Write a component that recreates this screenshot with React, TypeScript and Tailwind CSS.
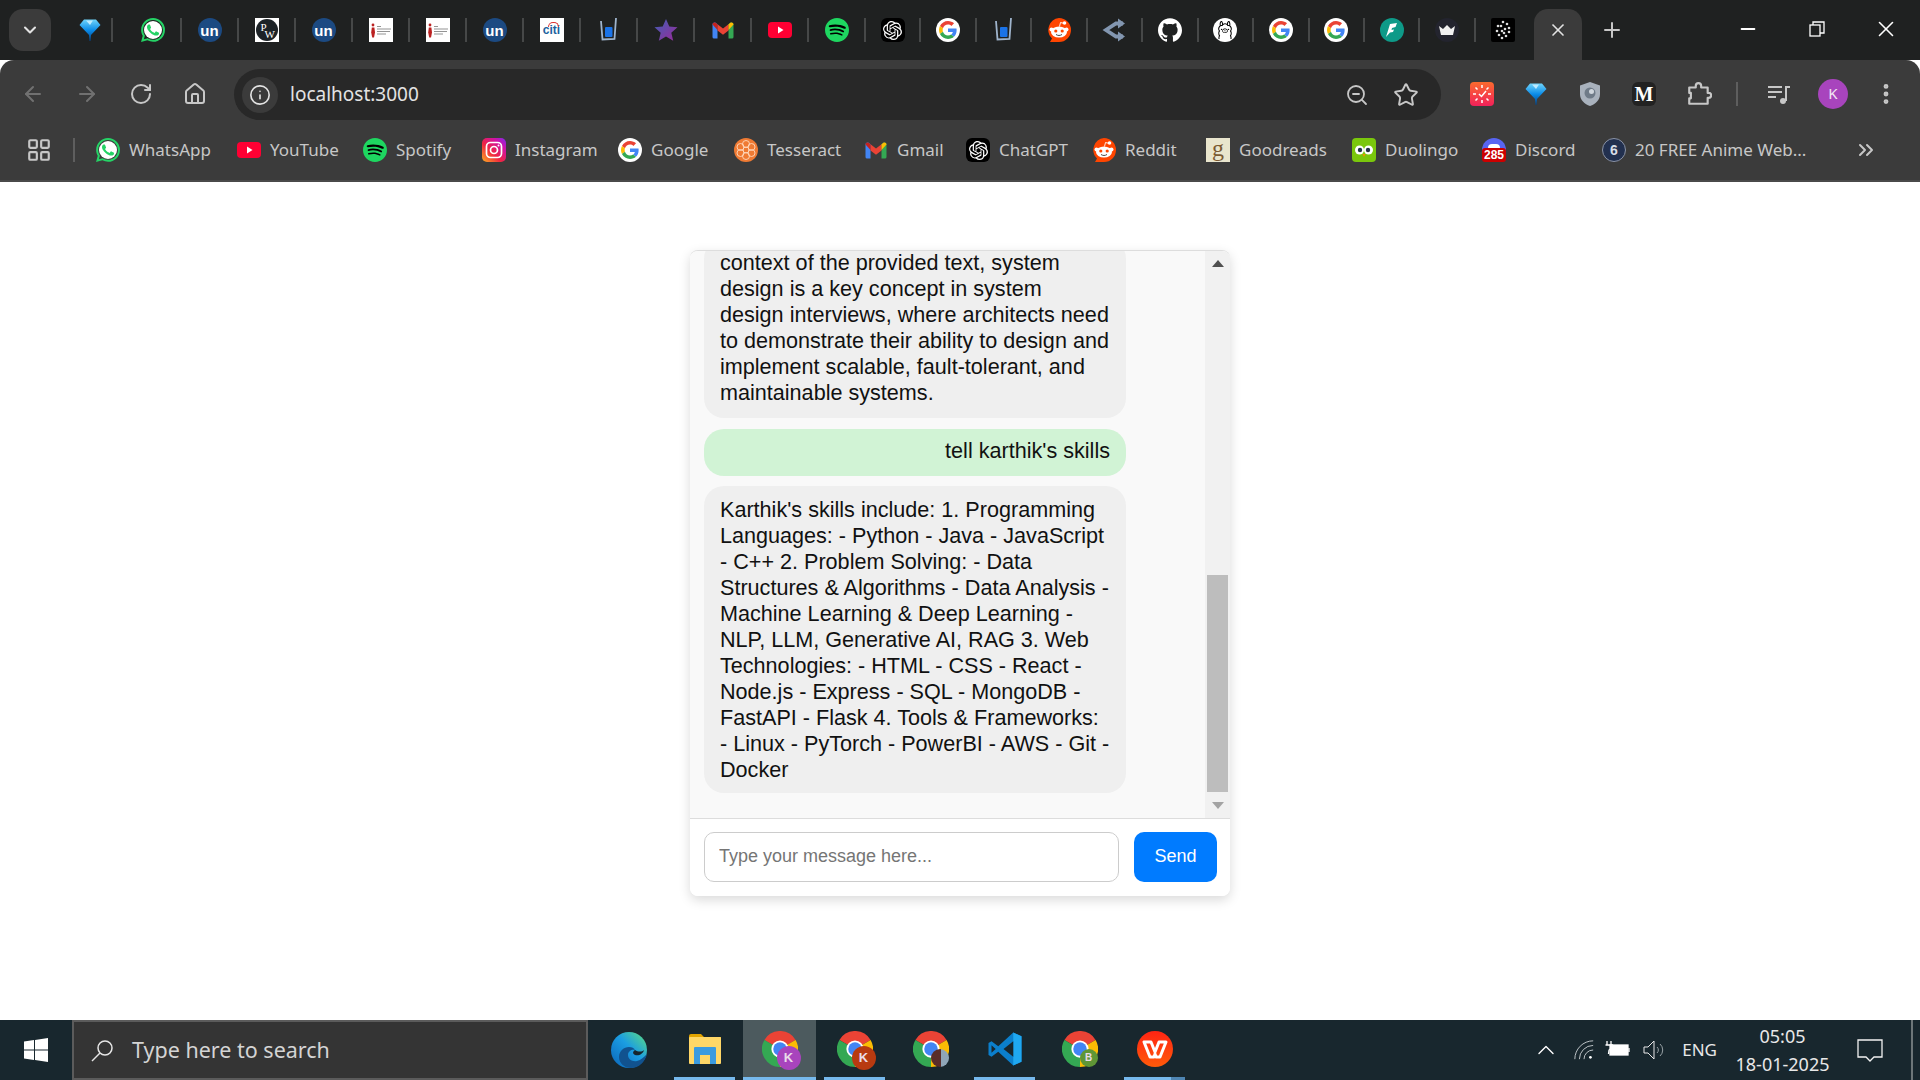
import type { ReactNode } from "react";
import {
  ArrowLeft,
  ArrowRight,
  ChevronDown,
  ChevronUp,
  ChevronsRight,
  EllipsisVertical,
  House,
  Info,
  LayoutGrid,
  Minus,
  Plus,
  RotateCw,
  Star,
  X,
  ZoomOut,
} from "lucide-react";
import { SiGithub, SiOllama, SiOpenai, SiSpotify, SiWhatsapp } from "react-icons/si";

function GoogleG() {
  return (
    <div className="w-6 h-6 rounded-full bg-white flex items-center justify-center">
      <svg viewBox="0 0 48 48" className="w-[18px] h-[18px]">
        <path fill="#EA4335" d="M24 9.5c3.54 0 6.71 1.22 9.21 3.6l6.85-6.85C35.9 2.38 30.47 0 24 0 14.62 0 6.51 5.38 2.56 13.22l7.98 6.19C12.43 13.72 17.74 9.5 24 9.5z" />
        <path fill="#4285F4" d="M46.98 24.55c0-1.57-.15-3.09-.38-4.55H24v9.02h12.94c-.58 2.96-2.26 5.48-4.78 7.18l7.73 6c4.51-4.18 7.09-10.36 7.09-17.65z" />
        <path fill="#FBBC05" d="M10.53 28.59c-.48-1.45-.76-2.99-.76-4.59s.27-3.14.76-4.59l-7.98-6.19C.92 16.46 0 20.12 0 24c0 3.88.92 7.54 2.56 10.78l7.97-6.19z" />
        <path fill="#34A853" d="M24 48c6.48 0 11.93-2.13 15.89-5.81l-7.73-6c-2.15 1.45-4.92 2.3-8.16 2.3-6.26 0-11.57-4.22-13.47-9.91l-7.98 6.19C6.51 42.62 14.62 48 24 48z" />
      </svg>
    </div>
  );
}

function Whatsapp() {
  return (
    <div className="w-6 h-6 relative">
      <div className="absolute inset-[3px] rounded-full bg-white" />
      <SiWhatsapp className="absolute inset-0 w-6 h-6 text-[#25d366]" />
    </div>
  );
}

function Diamond({ id }: { id: string }) {
  return (
    <svg viewBox="0 0 24 24" className="w-6 h-6">
      <defs>
        <linearGradient id={id} x1="0" y1="0" x2="0" y2="1">
          <stop offset="0" stopColor="#6fd4fb" />
          <stop offset="0.5" stopColor="#0a8be8" />
          <stop offset="1" stopColor="#06407f" />
        </linearGradient>
      </defs>
      <path fill={`url(#${id})`} d="M6 1.500h12l4.500 5.500-9.500 10-.5 6h-1l-.5-6L1.500 7z" />
      <path fill="#bdeafe" d="M8 2.500h7l-3 4.500z" />
    </svg>
  );
}

function Un() {
  return (
    <div className="w-6 h-6 rounded-full bg-[#1c4a82] flex items-center justify-center text-white text-[15px] font-bold leading-none font-['Liberation_Sans',sans-serif]">
      un
    </div>
  );
}

function Pw() {
  return (
    <div className="w-6 h-6 bg-white flex items-center justify-center">
      <div className="w-[22px] h-[22px] rounded-full bg-[#1c2226] text-white text-[11px] leading-none relative font-['Liberation_Serif',serif]">
        <span className="absolute left-[5px] top-[3px]">P</span>
        <span className="absolute left-[9px] top-[10px]">W</span>
      </div>
    </div>
  );
}

function Mit() {
  return (
    <svg viewBox="0 0 24 24" className="w-6 h-6">
      <rect width="24" height="24" fill="#fff" />
      <circle cx="4" cy="7" r="1.400" fill="#b22" />
      <path d="M2.800 9.500h2.600l.6 5-1 5H3.200l-1-5z" fill="#b22" />
      <path d="M8 8.500h4M8 11h14M8 13.500h13M8 16h9" stroke="#666" strokeWidth="0.700" />
    </svg>
  );
}

function Citi() {
  return (
    <div className="w-6 h-6 bg-white flex items-center justify-center text-[#20619e] text-[12px] font-bold leading-none font-['Liberation_Sans',sans-serif] relative">
      citi
      <div className="absolute top-[4px] left-[8px] w-[11px] h-[5px] border-t border-x border-[#d33] rounded-t-full" />
    </div>
  );
}

function Cup() {
  return (
    <svg viewBox="0 0 24 24" className="w-6 h-6">
      <path d="M4 3l1.500 18.500 12-.5L19 0" fill="none" stroke="#9fb4cc" strokeWidth="1.800" />
      <rect x="8" y="9" width="7.500" height="10" rx="1" fill="#1a73e8" />
    </svg>
  );
}

function StarIcon() {
  return (
    <svg viewBox="0 0 24 24" className="w-6 h-6">
      <defs>
        <linearGradient id="starfill" x1="0" y1="0" x2="1" y2="1">
          <stop offset="0" stopColor="#3f5fb5" />
          <stop offset="1" stopColor="#9a2a9a" />
        </linearGradient>
      </defs>
      <path fill="url(#starfill)" d="M12 1l3.300 7.500 8.200.8-6.200 5.400 1.900 8L12 18.500l-7.200 4.200 1.900-8L.5 9.300l8.200-.8z" />
    </svg>
  );
}

function Gmail() {
  return (
    <svg viewBox="0 0 24 24" className="w-6 h-6">
      <path fill="#4285f4" d="M1.500 6.500c0-1.800 2-2.700 3.400-1.600L6.500 6.200V20.500H3A1.500 1.500 0 0 1 1.500 19z" />
      <path fill="#34a853" d="M17.500 20.500V6.200l1.600-1.300c1.400-1.100 3.400-.2 3.400 1.600V19a1.500 1.500 0 0 1-1.500 1.500z" />
      <path fill="#ea4335" d="M6.500 6.200L12 10.500l5.500-4.300V12.500L12 16.700 6.500 12.500z" />
      <path fill="#c5221f" d="M1.500 6.500l5 5.500V6.200L4.900 4.900C3.500 3.800 1.500 4.700 1.500 6.500z" />
      <path fill="#fbbc04" d="M17.500 6.200l1.600-1.300c1.400-1.100 3.400-.2 3.400 1.600l-5 5.500z" />
    </svg>
  );
}

function Youtube() {
  return (
    <svg viewBox="0 0 24 24" className="w-6 h-6">
      <rect y="4" width="24" height="16" rx="4" fill="#ff0033" />
      <path d="M10 8.500v7l5.500-3.500z" fill="#fff" />
    </svg>
  );
}

function Spotify() {
  return (
    <div className="w-6 h-6 relative">
      <div className="absolute inset-[2px] rounded-full bg-black" />
      <SiSpotify className="absolute inset-0 w-6 h-6 text-[#1ed760]" />
    </div>
  );
}

function Gpt() {
  return (
    <div className="w-6 h-6 rounded-[6px] bg-black flex items-center justify-center">
      <SiOpenai className="w-[19px] h-[19px] text-white" />
    </div>
  );
}

function Reddit() {
  return (
    <svg viewBox="0 0 24 24" className="w-6 h-6">
      <path fill="#ff4500" d="M12 0a12 12 0 1 1 0 24H3l2-3.500A12 12 0 0 1 12 0z" />
      <ellipse cx="12" cy="14" rx="8" ry="5.500" fill="#fff" />
      <circle cx="4.500" cy="11.500" r="2" fill="#fff" />
      <circle cx="19.500" cy="11.500" r="2" fill="#fff" />
      <circle cx="17.500" cy="5" r="1.800" fill="#fff" />
      <path d="M12.500 8.500l1-4 4 1" stroke="#fff" strokeWidth="0.900" fill="none" />
      <circle cx="8.800" cy="13" r="1.600" fill="#ff4500" />
      <circle cx="15.200" cy="13" r="1.600" fill="#ff4500" />
      <path d="M9 16.500c2 1.300 4 1.300 6 0" stroke="#333" strokeWidth="0.900" fill="none" />
    </svg>
  );
}

function Arrows() {
  return (
    <svg viewBox="0 0 24 24" className="w-6 h-6">
      <path fill="none" stroke="#8296b0" strokeWidth="3.800" d="M21 5.500h-7L4 12l10 6.500h7" />
      <path fill="#8296b0" d="M16 .5l7 5-7 5zM16 13.500l7 5-7 5z" />
    </svg>
  );
}

function Llama() {
  return (
    <div className="w-6 h-6 rounded-full bg-white flex items-center justify-center">
      <SiOllama className="w-[18px] h-[18px] text-black" />
    </div>
  );
}

function Flash() {
  return (
    <svg viewBox="0 0 24 24" className="w-6 h-6">
      <circle cx="12" cy="12" r="12" fill="#0e9a88" />
      <path fill="#fff" d="M17 5l-7 1-4 13 4-4.500 3-.5 1-2.500-2.500.5.5-2 3.500-1z" />
    </svg>
  );
}

function Crown() {
  return (
    <svg viewBox="0 0 24 24" className="w-6 h-6">
      <circle cx="12" cy="12" r="12" fill="#23242e" />
      <path fill="#f1f1f1" d="M4 8l4 3 4-4 4 4 4-3-2 9H6z" />
    </svg>
  );
}

function BlackDots() {
  const dots = [
    [12, 4], [16, 6], [18, 10], [18, 14], [15, 18], [11, 20], [8, 17], [6, 13], [7, 8], [10, 8], [14, 11], [11, 13], [13, 15],
  ];
  return (
    <svg viewBox="0 0 24 24" className="w-6 h-6">
      <rect width="24" height="24" rx="2" fill="#000" />
      {dots.map(([cx, cy]) => (
        <circle key={`${cx}-${cy}`} cx={cx} cy={cy} r="1.300" fill="#ddd" />
      ))}
    </svg>
  );
}

function Instagram() {
  return (
    <svg viewBox="0 0 24 24" className="w-6 h-6">
      <defs>
        <linearGradient id="igfill" x1="0" y1="1" x2="1" y2="0">
          <stop offset="0" stopColor="#fdb022" />
          <stop offset="0.4" stopColor="#f0263f" />
          <stop offset="0.75" stopColor="#d012a6" />
          <stop offset="1" stopColor="#7a2cf0" />
        </linearGradient>
      </defs>
      <rect width="24" height="24" rx="5" fill="url(#igfill)" />
      <rect x="4.500" y="4.500" width="15" height="15" rx="4" fill="none" stroke="#fff" strokeWidth="1.700" />
      <circle cx="12" cy="12" r="3.500" fill="none" stroke="#fff" strokeWidth="1.700" />
      <circle cx="16.500" cy="7.500" r="1" fill="#fff" />
    </svg>
  );
}

function Tesseract() {
  return (
    <svg viewBox="0 0 24 24" className="w-6 h-6">
      <circle cx="12" cy="12" r="12" fill="#ef7a33" />
      <g fill="none" stroke="#ffd9bd" strokeWidth="0.900">
        <circle cx="12" cy="12" r="3" />
        <circle cx="12" cy="6" r="3.500" />
        <circle cx="12" cy="18" r="3.500" />
        <circle cx="6.500" cy="9" r="3.500" />
        <circle cx="17.500" cy="9" r="3.500" />
        <circle cx="6.500" cy="15" r="3.500" />
        <circle cx="17.500" cy="15" r="3.500" />
      </g>
    </svg>
  );
}

function Goodreads() {
  return (
    <div className="w-6 h-6 bg-[#e9e5cd] flex items-center justify-center text-[#7b5a32] text-[24px] leading-none pb-1 font-['Liberation_Serif',serif]">
      g
    </div>
  );
}

function Duolingo() {
  return (
    <svg viewBox="0 0 24 24" className="w-6 h-6">
      <rect width="24" height="24" rx="4" fill="#7ac70c" />
      <circle cx="7.500" cy="12" r="4.500" fill="#fff" />
      <circle cx="16.500" cy="12" r="4.500" fill="#fff" />
      <circle cx="8" cy="12" r="2.200" fill="#234" />
      <circle cx="16" cy="12" r="2.200" fill="#234" />
      <path d="M10.500 16h3L12 19z" fill="#f49000" />
    </svg>
  );
}

function Discord() {
  return (
    <div className="w-6 h-6 relative">
      <div className="absolute inset-x-0 top-0 h-[16px] rounded-t-full bg-[#5865f2]" />
      <div className="absolute left-[6px] top-[6px] w-3 h-[5px] rounded-t-sm bg-white" />
      <div className="absolute inset-x-0 bottom-0 h-[14px] rounded-[3px] bg-[#cc0000] text-white text-[12px] font-bold leading-[14px] text-center font-['Liberation_Sans',sans-serif]">
        285
      </div>
    </div>
  );
}

function Anime() {
  return (
    <div className="w-6 h-6 rounded-full bg-[#22304f] border border-[#8b93a5] flex items-center justify-center text-[#d8dde6] text-[14px] font-bold leading-none font-['Liberation_Sans',sans-serif]">
      6
    </div>
  );
}

function ClockExt() {
  return (
    <svg viewBox="0 0 24 24" className="w-6 h-6">
      <defs>
        <linearGradient id="clockfill" x1="0" y1="0" x2="0" y2="1">
          <stop offset="0" stopColor="#fb6a2e" />
          <stop offset="1" stopColor="#f2215a" />
        </linearGradient>
      </defs>
      <rect width="24" height="24" rx="4" fill="url(#clockfill)" />
      <path d="M12 3v3M12 18v3M3 12h3M18 12h3M5.500 5.500l2 2M18.500 5.500l-2 2M5.500 18.500l2-2M18.500 18.500l-2-2" stroke="#fff" strokeWidth="1.500" />
      <path d="M9 12l2.500 2.500L16 9" stroke="#fff" strokeWidth="1.500" fill="none" />
    </svg>
  );
}

function ShieldExt() {
  return (
    <svg viewBox="0 0 24 24" className="w-6 h-6">
      <path fill="#a9b2bd" d="M12 0l10 3.500V12c0 6-4.500 10-10 12C6.500 22 2 18 2 12V3.500z" />
      <circle cx="12" cy="11" r="5.500" fill="#6f7b88" />
      <circle cx="13.500" cy="9.500" r="2.500" fill="#cfd6dd" />
    </svg>
  );
}

function Puzzle() {
  return (
    <svg viewBox="0 0 24 24" className="w-[26px] h-[26px]" fill="none" stroke="#c7c7c7" strokeWidth="2" strokeLinejoin="round">
      <path d="M3 6h6V4.500a2.500 2.500 0 0 1 5 0V6h6v5h1a2 2 0 0 1 0 4.500h-1V21H3v-5h1.500v-5H3z" />
    </svg>
  );
}

function QueueMusic() {
  return (
    <svg viewBox="0 0 24 24" className="ml-[29px] w-6 h-6" fill="none" stroke="#c7c7c7" strokeWidth="2">
      <path d="M1 5h14M1 10h14M1 15h8" />
      <path d="M23 5h-4v14" />
      <circle cx="16" cy="19" r="3" fill="#c7c7c7" stroke="none" />
    </svg>
  );
}

function Restore() {
  return (
    <svg viewBox="0 0 16 16" className="w-4 h-4" fill="none" stroke="#fff" strokeWidth="1.300">
      <rect x="1" y="4" width="10" height="11" />
      <path d="M4 4V1h11v11h-4" />
    </svg>
  );
}

function Chrome({ badge, badgeClass }: { badge?: string; badgeClass: string }) {
  return (
    <div className="w-9 h-9 relative">
      <svg viewBox="0 0 48 48" className="w-9 h-9">
        <path fill="#ea4335" d="M24 24L3.200 12A24 24 0 0 1 44.800 12z" />
        <path fill="#fbbc04" d="M24 24L44.800 12A24 24 0 0 1 24 48z" />
        <path fill="#34a853" d="M24 24V48A24 24 0 0 1 3.200 12z" />
        <circle cx="24" cy="24" r="11.500" fill="#fff" />
        <circle cx="24" cy="24" r="9" fill="#4285f4" />
      </svg>
      <div className={`absolute rounded-full flex items-center justify-center text-[#eadbe8] font-bold leading-none font-['Liberation_Sans',sans-serif] ${badgeClass}`}>
        {badge}
      </div>
    </div>
  );
}

function Edge() {
  return (
    <svg viewBox="0 0 36 36" className="w-9 h-9">
      <defs>
        <linearGradient id="edgefill" x1="0" y1="1" x2="1" y2="0">
          <stop offset="0" stopColor="#0a63b8" />
          <stop offset="0.55" stopColor="#1b9de2" />
          <stop offset="1" stopColor="#5fe07e" />
        </linearGradient>
      </defs>
      <circle cx="18" cy="18" r="18" fill="url(#edgefill)" />
      <path fill="#11528f" d="M36 22c-2 8-8 14-16 14-7 0-12-5-12-11 0-6 5-10 10-10 3 0 5 1 6 3-3-1-7 1-7 5s4 7 9 6c4-1 7-4 10-7z" />
      <path fill="#17262d" d="M24 18c3 2 7 2 9 0-1 4-5 6-9 5-2-1-3-3 0-5z" />
    </svg>
  );
}

function Folder() {
  return (
    <svg viewBox="0 0 32 30" className="w-8 h-[30px]">
      <path fill="#e2a400" d="M0 2a2 2 0 0 1 2-2h10l3 3h17v6H0z" />
      <rect y="3" width="32" height="27" rx="1" fill="#ffd767" />
      <path fill="#3b9be0" d="M5 14a1 1 0 0 1 1-1h20a1 1 0 0 1 1 1v16h-6v-9H11v9H5z" />
    </svg>
  );
}

function VsCode() {
  return (
    <svg viewBox="0 0 24 24" className="w-9 h-9">
      <path fill="#0b7fcc" d="M17.500 1L7.500 10.200 3 6.800 1 8v8l2 1.200 4.500-3.400L17.500 23l5.500-2.500v-17z" />
      <path fill="#1fa8f1" d="M17.500 1L23 3.500v17L17.500 23z" />
      <path fill="#18272e" d="M17.500 6.800L11 12l6.500 5.200zM3 9.500v5L5.800 12z" />
    </svg>
  );
}

function Wps() {
  return (
    <svg viewBox="0 0 36 36" className="w-9 h-9">
      <defs>
        <linearGradient id="wpsfill" x1="0" y1="0" x2="0" y2="1">
          <stop offset="0" stopColor="#ff2413" />
          <stop offset="1" stopColor="#ff5a0a" />
        </linearGradient>
      </defs>
      <circle cx="18" cy="18" r="18" fill="url(#wpsfill)" />
      <path fill="none" stroke="#fff" strokeWidth="3" strokeLinejoin="round" d="M7 11h7l4 10 4-10h7l-6 15h-4l-1-3-1 3h-4z" />
    </svg>
  );
}

const tabIcons: ReactNode[] = [
  <Diamond id="dtab" />, <Whatsapp />, <Un />, <Pw />, <Un />, <Mit />, <Mit />, <Un />, <Citi />, <Cup />, <StarIcon />, <Gmail />, <Youtube />, <Spotify />,
  <Gpt />, <GoogleG />, <Cup />, <Reddit />, <Arrows />, <SiGithub className="w-6 h-6 text-white" />, <Llama />, <GoogleG />, <GoogleG />, <Flash />, <Crown />,
];

const bookmarks: { name: string; icon: ReactNode; width: string }[] = [
  { name: "WhatsApp", icon: <Whatsapp />, width: "w-[141px]" },
  { name: "YouTube", icon: <Youtube />, width: "w-[126px]" },
  { name: "Spotify", icon: <Spotify />, width: "w-[119px]" },
  { name: "Instagram", icon: <Instagram />, width: "w-[136px]" },
  { name: "Google", icon: <GoogleG />, width: "w-[116px]" },
  { name: "Tesseract", icon: <Tesseract />, width: "w-[130px]" },
  { name: "Gmail", icon: <Gmail />, width: "w-[102px]" },
  { name: "ChatGPT", icon: <Gpt />, width: "w-[126px]" },
  { name: "Reddit", icon: <Reddit />, width: "w-[114px]" },
  { name: "Goodreads", icon: <Goodreads />, width: "w-[146px]" },
  { name: "Duolingo", icon: <Duolingo />, width: "w-[130px]" },
  { name: "Discord", icon: <Discord />, width: "w-[120px]" },
  { name: "20 FREE Anime Web...", icon: <Anime />, width: "w-[240px]" },
];

function TabStrip() {
  return (
    <div className="h-[60px] bg-[#1f2121] flex items-start pl-[9px] relative">
      <div className="mt-[9px] w-[42px] h-[42px] rounded-[14px] bg-[#3b3b3b] flex items-center justify-center">
        <ChevronDown size={20} strokeWidth={2.5} className="text-[#e3e3e3]" />
      </div>
      <div className="flex items-center h-[60px] ml-[17px]">
        {tabIcons.map((icon, i) => (
          <div key={i} className={`h-6 flex items-center ${i < 14 ? "w-[57px]" : "w-[55.45px]"} ${i === 0 ? "pr-[12px]" : ""}`}>
            <div className="flex-1 flex justify-center">{icon}</div>
            <div className="w-[2px] h-6 bg-[#464848]" />
          </div>
        ))}
        <div className="w-[55px] flex justify-center">
          <BlackDots />
        </div>
      </div>
      <div className="ml-[3px] mt-[9px] w-[48px] h-[51px] rounded-t-[14px] bg-[#3b3b3b] flex items-center justify-center pb-[9px]">
        <X size={20} strokeWidth={2} className="text-[#e3e3e3]" />
      </div>
      <div className="w-[60px] h-[60px] flex items-center justify-center">
        <Plus size={24} strokeWidth={2} className="text-[#c7c7c7]" />
      </div>
      <div className="ml-auto flex items-center h-[58px]">
        <div className="w-[69px] flex justify-center"><Minus size={22} className="text-white" /></div>
        <div className="w-[69px] flex justify-center"><Restore /></div>
        <div className="w-[69px] flex justify-center"><X size={26} strokeWidth={1.5} className="text-white" /></div>
      </div>
    </div>
  );
}

function Toolbar() {
  return (
    <div className="h-[60px] bg-[#3b3b3b] rounded-t-[14px] flex items-start pl-[21px] pr-[21px]">
      <div className="h-[60px] flex items-center gap-[30px] pt-[7px]">
        <ArrowLeft size={24} strokeWidth={2} className="text-[#717171]" />
        <ArrowRight size={24} strokeWidth={2} className="text-[#717171]" />
        <RotateCw size={24} strokeWidth={2} className="text-[#c7c7c7]" />
        <House size={24} strokeWidth={2} className="text-[#c7c7c7]" />
      </div>
      <div className="ml-[27px] mt-[9px] w-[1208px] h-[51px] rounded-full bg-[#282828] flex items-center pl-[8px] pr-[22px]">
        <div className="w-9 h-9 rounded-full bg-[#3b3b3b] flex items-center justify-center">
          <Info size={22} strokeWidth={1.8} className="text-[#e3e3e3]" />
        </div>
        <span className="ml-[12px] text-[#e3e3e3] text-[19px] font-['Noto_Sans',sans-serif]">localhost:3000</span>
        <div className="ml-auto flex items-center gap-[24px]">
          <ZoomOut size={24} strokeWidth={1.8} className="text-[#c7c7c7]" />
          <Star size={26} strokeWidth={1.8} className="text-[#c7c7c7]" />
        </div>
      </div>
      <div className="h-[60px] flex items-center pt-[7px] ml-[29px]">
        <div className="flex items-center gap-[30px]">
          <ClockExt />
          <Diamond id="dext" />
          <ShieldExt />
          <div className="w-6 h-6 rounded-[6px] bg-[#222] flex items-center justify-center text-white text-[20px] font-bold leading-none font-['Liberation_Serif',serif]">M</div>
          <Puzzle />
        </div>
        <div className="ml-[24px] w-[2px] h-6 bg-[#5e5e5e]" />
        <QueueMusic />
        <div className="ml-[27px] w-[30px] h-[30px] rounded-full bg-[#a844bd] flex items-center justify-center text-[#f2e6f4] text-[15px] font-['Noto_Sans',sans-serif]">K</div>
        <EllipsisVertical size={26} strokeWidth={2.5} className="ml-[25px] text-[#c7c7c7]" />
      </div>
    </div>
  );
}

function BookmarkBar() {
  return (
    <div className="h-[62px] bg-[#3b3b3b] border-b-2 border-[#4a4a4a] flex items-center pl-[28px] pr-[42px] font-['Noto_Sans',sans-serif]">
      <LayoutGrid size={26} strokeWidth={2} className="text-[#c7c7c7] -ml-[2px]" />
      <div className="ml-[21px] w-[2px] h-6 bg-[#5e5e5e]" />
      <div className="ml-[21px] flex items-center">
        {bookmarks.map((b) => (
          <div key={b.name} className={`flex items-center gap-[9px] ${b.width}`}>
            <div className="w-6 h-6 shrink-0 flex items-center justify-center">{b.icon}</div>
            <span className="text-[#c7c7c7] text-[17px] whitespace-nowrap">{b.name}</span>
          </div>
        ))}
      </div>
      <ChevronsRight size={24} strokeWidth={2} className="ml-auto text-[#c7c7c7]" />
    </div>
  );
}

function Bubble({ children, className }: { children: ReactNode; className: string }) {
  return <div className={`w-[422px] px-4 rounded-[20px] shrink-0 ${className}`}>{children}</div>;
}

function ChatCard() {
  return (
    <div className="w-[540px] h-[646px] bg-white rounded-[8px] shadow-[0_4px_12px_rgba(0,0,0,0.15)] border-t border-[#dddddd] flex flex-col overflow-hidden font-['Liberation_Sans',sans-serif]">
      <div className="flex-1 min-h-0 flex bg-[#f9f9f9] border-b border-[#dddddd]">
        <div className="flex-1 min-w-0 flex flex-col justify-end gap-[10.5px] overflow-hidden pl-[14px] pb-[25px] text-[21.6px] leading-[26px] text-[#111]">
          <Bubble className="bg-[#efefef] pt-[11px] pb-[12px]">
            context of the provided text, system design is a key concept in system design interviews, where architects need to demonstrate their ability to design and implement scalable, fault-tolerant, and maintainable systems.
          </Bubble>
          <Bubble className="bg-[#d1f3d5] text-right pt-[9px] pb-[12px]">tell karthik's skills</Bubble>
          <Bubble className="bg-[#efefef] py-[10.5px]">
            Karthik's skills include: 1. Programming Languages: - Python - Java - JavaScript - C++ 2. Problem Solving: - Data Structures &amp; Algorithms - Data Analysis - Machine Learning &amp; Deep Learning - NLP, LLM, Generative AI, RAG 3. Web Technologies: - HTML - CSS - React - Node.js - Express - SQL - MongoDB - FastAPI - Flask 4. Tools &amp; Frameworks: - Linux - PyTorch - PowerBI - AWS - Git - Docker
          </Bubble>
        </div>
        <div className="w-[25px] bg-[#f1f1f1] flex flex-col items-center">
          <div className="h-[24px] flex items-center justify-center">
            <div className="w-0 h-0 border-x-[6px] border-x-transparent border-b-[7px] border-b-[#505050]" />
          </div>
          <div className="flex-1" />
          <div className="w-[21px] h-[217px] bg-[#bdbdbd]" />
          <div className="h-[26px] flex items-center justify-center">
            <div className="w-0 h-0 border-x-[6px] border-x-transparent border-t-[7px] border-t-[#a3a3a3]" />
          </div>
        </div>
      </div>
      <div className="h-[77px] shrink-0 flex items-center pl-[14px] pr-[13px] pb-[2px] gap-[15px] bg-white">
        <input
          placeholder="Type your message here..."
          className="w-[416px] h-[50px] px-[14px] rounded-[10px] border border-[#cccccc] bg-white text-[18px] placeholder:text-[#757575] outline-none"
        />
        <button className="w-[83px] h-[50px] rounded-[10px] bg-[#007bff] text-white text-[18px]">Send</button>
      </div>
    </div>
  );
}

function TaskSlot({ width, active, line, children }: { width: string; active?: boolean; line?: string; children: ReactNode }) {
  return (
    <div className={`h-[60px] flex flex-col items-center shrink-0 ${width} ${active ? "bg-[#4c5a5e]" : ""}`}>
      <div className="flex-1 flex items-center justify-center">{children}</div>
      <div className={`h-[3px] ${line ?? ""}`} />
    </div>
  );
}

function Taskbar() {
  return (
    <div className="h-[60px] bg-[#18272e] flex items-stretch text-white shrink-0">
      <div className="w-[72px] flex items-center justify-center">
        <svg viewBox="0 0 24 24" className="w-6 h-6" fill="#fff">
          <path d="M0 3.500l10-1.400v9.400H0zM11 1.900L24 0v11.500H11zM0 12.500h10v9.400L0 20.500zM11 12.500h13V24l-13-1.900z" />
        </svg>
      </div>
      <div className="w-[516px] bg-[#343434] border-2 border-[#5b5b5b] flex items-center pl-[16px] pt-[1px] font-['Noto_Sans',sans-serif]">
        <svg viewBox="0 0 24 24" className="w-6 h-6" fill="none" stroke="#e6e6e6" strokeWidth="1.500">
          <circle cx="15" cy="9" r="7" />
          <path d="M10 14l-8 8" />
        </svg>
        <span className="ml-[18px] text-[21.5px] text-[#d4d4d4]">Type here to search</span>
      </div>
      <div className="flex items-stretch ml-[5px]">
        <div className="w-[72px] flex items-center justify-center"><Edge /></div>
        <div className="w-[9px]" />
        <TaskSlot width="w-[61px]" line="w-full bg-[#76b9ed]"><Folder /></TaskSlot>
        <div className="w-[8px]" />
        <TaskSlot width="w-[73px]" active line="w-full bg-[#76b9ed]">
          <Chrome badge="K" badgeClass="-right-[3px] -bottom-[3px] w-6 h-6 bg-[#a844bd] text-[13px]" />
        </TaskSlot>
        <div className="w-[8px]" />
        <TaskSlot width="w-[61px]" line="w-full bg-[#76b9ed]">
          <Chrome badge="K" badgeClass="-right-[3px] -bottom-[3px] w-6 h-6 bg-[#b83a10] text-[13px]" />
        </TaskSlot>
        <div className="w-[15px]" />
        <TaskSlot width="w-[61px]">
          <Chrome badgeClass="right-0 bottom-0 w-[18px] h-[18px] bg-[linear-gradient(to_right,#5a2d2a_55%,#8fa6b8_55%)]" />
        </TaskSlot>
        <div className="w-[13px]" />
        <TaskSlot width="w-[61px]" line="w-full bg-[#76b9ed]"><VsCode /></TaskSlot>
        <div className="w-[14px]" />
        <TaskSlot width="w-[61px]">
          <Chrome badge="B" badgeClass="right-0 bottom-0 w-[18px] h-[18px] bg-[#5f9636] text-[10px]" />
        </TaskSlot>
        <div className="w-[14px]" />
        <TaskSlot width="w-[61px]" line="w-full bg-[linear-gradient(to_right,#76b9ed_77%,#4f86b3_77%)]"><Wps /></TaskSlot>
      </div>
      <div className="ml-auto flex items-center pr-[7px] font-['Noto_Sans',sans-serif]">
        <ChevronUp size={28} strokeWidth={1.2} className="text-white" />
        <svg viewBox="0 0 24 24" className="ml-[13px] w-[22px] h-[22px]" fill="none" stroke="#c9cfd2" strokeWidth="1">
          <path d="M2 22a20 20 0 0 1 20-20M7 22a15 15 0 0 1 15-15M12 22a10 10 0 0 1 10-10" />
          <circle cx="19" cy="20" r="1.500" fill="#fff" stroke="none" />
        </svg>
        <svg viewBox="0 0 26 20" className="ml-[10px] w-[26px] h-5" fill="none" stroke="#fff" strokeWidth="1.300">
          <path d="M2 1v4M6 1v4M0.500 5h7v2.500L4 10 3.500 14" />
          <rect x="5" y="5" width="18" height="10" fill="#fff" />
          <path d="M24 8v4" />
        </svg>
        <svg viewBox="0 0 24 24" className="ml-[11px] w-6 h-6" fill="none" stroke="#e8e8e8" strokeWidth="1">
          <path d="M2 9h4l6-6v18l-6-6H2z" />
          <path d="M15 9a4 4 0 0 1 0 6M18 6a8 8 0 0 1 0 12" stroke="#9aa3a7" />
        </svg>
        <span className="ml-[16px] text-[17px] text-[#e8e8e8]">ENG</span>
        <div className="ml-[18px] w-[95px] text-center text-[18px] leading-[28px] text-[#e8e8e8]">
          <div>05:05</div>
          <div>18-01-2025</div>
        </div>
        <svg viewBox="0 0 26 24" className="ml-[27px] w-[26px] h-6" fill="none" stroke="#f2f2f2" strokeWidth="1.300">
          <path d="M1 2h24v17h-8l-4 4-4-4H1z" />
        </svg>
        <div className="ml-[28px] w-[2px] h-[60px] bg-[#6d7679]" />
      </div>
    </div>
  );
}

export default function App() {
  return (
    <div className="w-[1920px] h-[1080px] flex flex-col overflow-hidden bg-white">
      <TabStrip />
      <Toolbar />
      <BookmarkBar />
      <main className="flex-1 min-h-0 bg-white flex justify-center pt-[68px]">
        <ChatCard />
      </main>
      <Taskbar />
    </div>
  );
}
